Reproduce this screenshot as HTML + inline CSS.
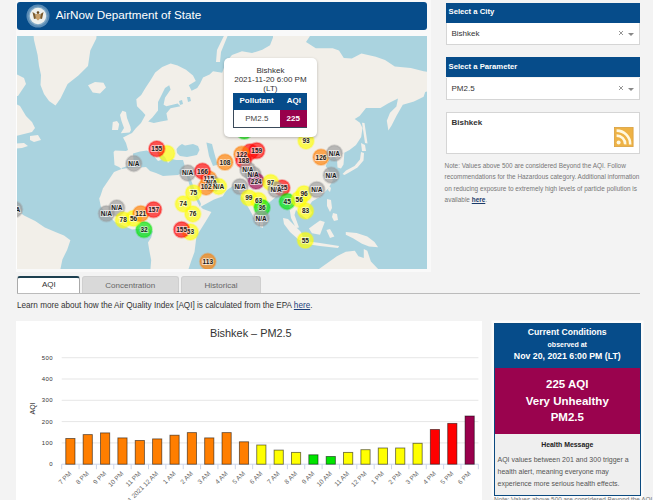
<!DOCTYPE html>
<html><head><meta charset="utf-8">
<style>
*{box-sizing:border-box;margin:0;padding:0}
html,body{width:653px;height:500px;overflow:hidden;background:#f3f3f3;font-family:"Liberation Sans",sans-serif;color:#333}
.abs{position:absolute}
#hdr{left:17px;top:2px;width:410px;height:28px;background:#064c8a;border-radius:3px}
#hdr .t{left:38.8px;top:5.5px;font-size:11.7px;color:#fff;white-space:nowrap}
.mk{font-size:6.5px;font-weight:bold;fill:#1a1a1a;text-anchor:middle;stroke:#fff;stroke-width:1.8px;paint-order:stroke;stroke-opacity:0.6}
#map{left:16px;top:36px;width:411px;height:233px;background:#aad3df;overflow:hidden}
.ph{left:445.5px;width:194.5px;height:20px;background:#064c8a;color:#fff;font-weight:bold;font-size:7.7px;padding:4.9px 0 0 3px;white-space:nowrap}
.sel{left:445.5px;width:194.5px;height:22px;background:#fff;border:1px solid #d5d5d5;border-top:none;font-size:8px;padding:6.6px 0 0 5px}
.sel .x{position:absolute;left:171.8px;top:7.3px}
.sel .c{position:absolute;right:5px;top:10px;width:0;height:0;border-left:3px solid transparent;border-right:3px solid transparent;border-top:3px solid #888}
.note{left:444.6px;top:160px;width:196px;font-size:6.43px;line-height:11.4px;color:#777}
.tab{top:275.5px;height:18px;font-size:8px;text-align:center;padding-top:4px;color:#666;background:#d9d9d9;border:1px solid #cfcfcf;border-bottom:none;border-radius:3px 3px 0 0}
#chart{left:16px;top:320.5px;width:466px;height:190px;background:#fff}
.ct{left:0;width:100%;text-align:center;white-space:nowrap}
#cc{left:494px;top:322.5px;width:146.5px;height:173px;border:1px solid #0b4a80;background:#efefef;box-shadow:0 0 0 2.5px #fbfbfb}
</style></head><body>
<div id="panel" class="abs" style="left:15.5px;top:0;width:415px;height:272px;background:#f9f9f9"></div>
<div id="hdr" class="abs">
  <svg class="abs" style="left:8.7px;top:2.3px" width="24" height="24" viewBox="0 0 24 24">
    <circle cx="12" cy="12" r="11.5" fill="#5a8cb6"/>
    <circle cx="12" cy="12" r="9.6" fill="#7fa8c6"/>
    <circle cx="12" cy="12" r="8.2" fill="#eef1ee"/>
    <path d="M6.5 8 L9.5 10 L10 14.5 L8 15 Z M17.5 8 L14.5 10 L14 14.5 L16 15 Z" fill="#7a5a2c"/>
    <path d="M10 10 L14 10 L14.2 14.5 L12 16.5 L9.8 14.5 Z" fill="#c8a06a"/>
    <circle cx="12" cy="8.6" r="1.3" fill="#6a4a20"/>
  </svg>
  <div class="t abs">AirNow Department of State</div>
</div>

<div id="map" class="abs">
<svg width="411" height="233" viewBox="0 0 411 233" style="position:absolute;left:0;top:0">
<g id="land" transform="translate(-16,-36)">
<path d="M33.0,30.0 L97.0,30.0 L96.3,38.4 L90.3,50.4 L88.0,66.0 L78.4,75.6 L67.6,84.0 L60.5,98.4 L55.5,105.6 L49.0,101.0 L44.0,94.0 L40.5,85.0 L41.0,75.0 L39.0,66.0 L37.6,55.0 L34.0,40.0Z M88.0,85.2 L95.0,82.0 L103.5,82.8 L106.0,87.6 L100.0,93.6 L92.7,92.4Z M10.0,70.0 L16.0,74.0 L24.0,78.0 L26.0,84.0 L22.0,90.0 L18.0,96.0 L10.0,96.0Z M10.0,104.0 L16.0,104.0 L20.0,106.0 L26.0,116.0 L32.0,122.0 L35.0,128.0 L32.0,132.0 L24.0,134.0 L16.0,136.0 L10.0,136.0Z M30.0,136.0 L38.0,135.0 L41.0,140.0 L34.0,142.0 L30.0,140.0Z M10.0,144.0 L24.0,143.0 L28.0,146.0 L22.0,148.0 L10.0,149.0Z M10.0,207.0 L16.0,209.8 L24.0,215.4 L35.2,221.0 L44.8,227.4 L56.0,232.2 L64.0,235.4 L70.4,240.2 L67.2,249.8 L62.4,259.4 L59.2,275.0 L10.0,275.0Z M122.4,110.8 L126.0,112.0 L127.0,118.0 L130.4,126.8 L131.0,130.0 L129.6,132.4 L120.8,133.2 L124.0,128.0 L121.5,121.0 L120.0,115.0Z M112.8,122.0 L117.0,121.0 L119.2,124.0 L118.0,130.0 L112.0,130.0Z M142.6,111.8 L137.0,106.2 L136.3,99.2 L141.2,95.0 L145.4,88.0 L151.0,79.6 L155.2,72.6 L162.2,67.0 L170.6,63.5 L177.6,65.6 L186.0,69.8 L193.0,75.4 L195.8,81.0 L188.8,85.2 L191.6,90.8 L197.2,88.0 L200.0,83.8 L203.0,77.6 L209.6,74.4 L213.0,71.2 L222.2,72.8 L226.0,62.0 L232.0,55.0 L242.0,51.3 L252.0,53.0 L262.3,49.8 L270.0,45.2 L273.0,37.5 L273.0,30.0 L314.0,30.0 L306.0,42.0 L315.8,48.3 L332.7,48.3 L339.0,50.4 L343.8,58.0 L351.8,58.4 L361.4,53.6 L375.8,56.8 L385.0,60.0 L394.8,66.4 L410.8,68.0 L423.6,71.2 L435.0,72.8 L435.0,88.8 L425.2,92.0 L423.6,96.8 L414.0,101.6 L402.8,104.8 L396.4,116.0 L391.6,125.6 L388.4,130.4 L386.8,120.8 L390.0,112.8 L396.4,106.4 L398.0,98.4 L388.4,103.2 L380.4,108.0 L366.0,108.0 L359.6,116.0 L354.7,118.9 L359.9,122.8 L362.5,128.0 L361.2,137.1 L356.0,144.9 L349.5,150.1 L344.3,152.7 L344.0,158.0 L343.5,164.4 L341.0,168.5 L337.5,167.5 L337.0,160.0 L334.0,156.0 L328.8,160.0 L325.6,166.0 L330.0,172.0 L332.8,180.8 L328.0,188.8 L320.0,196.8 L312.0,201.6 L308.8,206.4 L312.0,212.8 L307.2,219.2 L300.0,214.0 L296.0,210.0 L294.5,215.0 L299.0,227.5 L296.0,228.0 L291.0,218.0 L289.0,205.0 L286.2,201.4 L279.0,194.2 L268.4,203.2 L262.0,215.0 L258.0,226.0 L252.0,214.0 L244.0,200.0 L238.0,190.0 L233.0,186.0 L227.0,190.0 L225.0,192.5 L222.8,196.3 L214.0,199.6 L200.7,206.7 L203.0,209.0 L211.4,212.0 L206.0,221.0 L201.0,229.0 L196.5,236.0 L195.5,244.0 L194.5,252.0 L191.4,260.4 L188.2,270.0 L187.0,275.0 L150.0,275.0 L151.2,260.0 L149.6,252.0 L148.0,242.4 L151.2,237.6 L152.8,231.2 L148.0,228.0 L132.0,229.6 L115.0,222.0 L106.0,213.0 L100.8,206.6 L99.2,198.6 L100.4,196.0 L102.9,188.6 L109.5,178.8 L114.0,172.0 L121.5,169.0 L119.0,167.0 L114.5,165.0 L113.6,152.0 L115.0,150.5 L126.0,151.0 L128.0,150.0 L126.0,143.0 L123.0,137.5 L128.0,135.0 L132.0,133.0 L136.0,128.0 L141.0,123.0 L145.4,115.0 L142.6,111.8Z M226.8,30.0 L230.0,30.0 L221.0,52.0 L220.0,62.0 L216.0,62.0 L217.0,50.0Z M362.0,122.8 L364.5,123.0 L367.5,143.6 L365.0,143.0Z M361.0,143.0 L365.0,145.0 L366.0,151.0 L362.0,151.0Z M361.0,152.0 L364.0,153.0 L363.5,160.5 L357.5,167.5 L349.0,172.5 L344.5,175.0 L342.5,174.0 L346.0,170.5 L354.5,166.0 L360.0,159.5Z M329.0,186.0 L331.0,188.0 L330.0,192.0 L328.0,190.0Z M327.0,199.0 L331.0,200.0 L332.0,208.0 L330.0,212.0 L327.0,206.0Z M333.0,213.0 L337.0,214.0 L338.0,220.0 L334.0,221.0 L332.0,217.0Z M308.9,228.4 L315.0,224.0 L320.0,220.5 L324.8,222.0 L320.0,234.8 L312.0,233.2Z M326.4,230.0 L330.0,229.0 L334.4,236.4 L330.0,238.0Z M283.0,218.0 L288.0,219.0 L295.0,226.0 L301.0,232.0 L304.0,240.0 L299.0,240.0 L290.0,232.0 L284.0,224.0Z M305.0,241.0 L320.0,243.0 L339.2,246.0 L338.0,248.0 L320.0,246.0 L306.0,244.0Z M345.8,232.0 L356.6,232.9 L367.3,236.5 L374.5,241.9 L378.1,247.3 L369.1,246.4 L362.0,243.7 L353.0,238.3 L345.8,234.7Z M318.5,275.0 L319.0,269.0 L336.9,256.2 L345.8,251.7 L354.8,250.8 L358.4,256.2 L363.8,258.0 L363.8,249.0 L367.3,250.8 L370.9,261.6 L378.1,269.0 L380.0,275.0Z M260.0,220.0 L263.0,222.0 L263.0,228.0 L260.0,227.0Z" fill="#f2efe9"/>
<path d="M169.2,85.2 L170.6,89.4 L165.0,97.8 L163.6,104.8 L166.4,106.2 L177.6,103.4 L180.4,106.2 L170.6,108.3 L166.4,113.2 L167.8,120.2 L160.8,121.6 L153.8,123.0 L148.2,121.6 L152.4,117.4 L158.0,110.4 L158.0,102.0 L160.8,96.4 L165.0,88.0Z M121.5,168.0 L128.0,166.0 L133.5,160.0 L133.0,153.5 L140.0,151.5 L147.0,150.5 L153.0,155.0 L158.0,161.0 L161.0,160.0 L157.0,152.0 L153.0,147.0 L158.0,150.0 L165.0,157.0 L168.0,163.0 L172.0,159.0 L176.0,160.0 L183.0,160.0 L184.5,165.0 L184.0,172.0 L178.0,175.0 L170.0,175.6 L163.0,176.0 L156.0,173.0 L150.0,171.0 L146.0,167.0 L140.0,167.5 L128.0,168.0 L122.0,169.0Z M176.5,149.0 L179.0,146.0 L182.0,144.0 L185.0,145.5 L193.0,144.0 L198.0,146.0 L199.5,150.0 L197.0,155.0 L187.0,156.9 L180.0,156.0 L177.0,153.0Z M206.4,142.4 L212.0,144.0 L214.0,152.0 L217.6,164.8 L213.0,166.0 L209.0,156.0Z M179.0,101.0 L182.0,100.0 L183.0,104.0 L180.0,105.0Z M187.0,97.0 L190.0,97.0 L191.0,101.0 L188.0,102.0Z M185.0,170.0 L188.0,172.0 L194.0,188.0 L201.0,204.0 L200.0,207.0 L191.0,190.0Z M205.0,176.0 L212.0,183.0 L218.0,190.0 L216.0,192.0 L208.0,186.0 L203.0,179.0Z" fill="#aad3df"/>
</g>
<g id="mk" transform="translate(-16,-36)">
<circle cx="14.5" cy="209.4" r="7.9" fill="#999999" fill-opacity="0.66" stroke="#999999" stroke-opacity="0.3" stroke-width="2"/>
<circle cx="133.8" cy="163.5" r="7.9" fill="#999999" fill-opacity="0.66" stroke="#999999" stroke-opacity="0.3" stroke-width="2"/>
<circle cx="166.9" cy="153.4" r="7.9" fill="#ffff00" fill-opacity="0.66" stroke="#ffff00" stroke-opacity="0.3" stroke-width="2"/>
<circle cx="156.8" cy="148.8" r="7.9" fill="#ff0000" fill-opacity="0.66" stroke="#ff0000" stroke-opacity="0.3" stroke-width="2"/>
<circle cx="187.7" cy="173.0" r="7.9" fill="#999999" fill-opacity="0.66" stroke="#999999" stroke-opacity="0.3" stroke-width="2"/>
<circle cx="208.8" cy="178.9" r="7.9" fill="#ff7e00" fill-opacity="0.66" stroke="#ff7e00" stroke-opacity="0.3" stroke-width="2"/>
<circle cx="211.5" cy="183.0" r="7.9" fill="#999999" fill-opacity="0.66" stroke="#999999" stroke-opacity="0.3" stroke-width="2"/>
<circle cx="218.7" cy="186.5" r="7.9" fill="#ffff00" fill-opacity="0.66" stroke="#ffff00" stroke-opacity="0.3" stroke-width="2"/>
<circle cx="206.1" cy="187.0" r="7.9" fill="#ff7e00" fill-opacity="0.66" stroke="#ff7e00" stroke-opacity="0.3" stroke-width="2"/>
<circle cx="202.5" cy="171.2" r="7.9" fill="#ff0000" fill-opacity="0.66" stroke="#ff0000" stroke-opacity="0.3" stroke-width="2"/>
<circle cx="193.5" cy="192.8" r="7.9" fill="#ffff00" fill-opacity="0.66" stroke="#ffff00" stroke-opacity="0.3" stroke-width="2"/>
<circle cx="183.2" cy="204.0" r="7.9" fill="#ffff00" fill-opacity="0.66" stroke="#ffff00" stroke-opacity="0.3" stroke-width="2"/>
<circle cx="192.8" cy="214.0" r="7.9" fill="#ffff00" fill-opacity="0.66" stroke="#ffff00" stroke-opacity="0.3" stroke-width="2"/>
<circle cx="190.4" cy="232.0" r="7.9" fill="#ffff00" fill-opacity="0.66" stroke="#ffff00" stroke-opacity="0.3" stroke-width="2"/>
<circle cx="181.6" cy="229.6" r="7.9" fill="#ff0000" fill-opacity="0.66" stroke="#ff0000" stroke-opacity="0.3" stroke-width="2"/>
<circle cx="207.8" cy="261.5" r="7.9" fill="#ff7e00" fill-opacity="0.66" stroke="#ff7e00" stroke-opacity="0.3" stroke-width="2"/>
<circle cx="116.8" cy="208.0" r="7.9" fill="#999999" fill-opacity="0.66" stroke="#999999" stroke-opacity="0.3" stroke-width="2"/>
<circle cx="106.4" cy="213.6" r="7.9" fill="#999999" fill-opacity="0.66" stroke="#999999" stroke-opacity="0.3" stroke-width="2"/>
<circle cx="144.0" cy="229.6" r="7.9" fill="#00e400" fill-opacity="0.66" stroke="#00e400" stroke-opacity="0.3" stroke-width="2"/>
<circle cx="123.2" cy="220.0" r="7.9" fill="#ffff00" fill-opacity="0.66" stroke="#ffff00" stroke-opacity="0.3" stroke-width="2"/>
<circle cx="133.6" cy="218.4" r="7.9" fill="#ffff00" fill-opacity="0.66" stroke="#ffff00" stroke-opacity="0.3" stroke-width="2"/>
<circle cx="140.8" cy="213.6" r="7.9" fill="#ff7e00" fill-opacity="0.66" stroke="#ff7e00" stroke-opacity="0.3" stroke-width="2"/>
<circle cx="153.6" cy="209.6" r="7.9" fill="#ff0000" fill-opacity="0.66" stroke="#ff0000" stroke-opacity="0.3" stroke-width="2"/>
<circle cx="225.0" cy="162.2" r="7.9" fill="#ff7e00" fill-opacity="0.66" stroke="#ff7e00" stroke-opacity="0.3" stroke-width="2"/>
<circle cx="244.3" cy="131.2" r="7.9" fill="#00e400" fill-opacity="0.66" stroke="#00e400" stroke-opacity="0.3" stroke-width="2"/>
<circle cx="306.0" cy="141.0" r="7.9" fill="#ffff00" fill-opacity="0.66" stroke="#ffff00" stroke-opacity="0.3" stroke-width="2"/>
<circle cx="250.0" cy="152.0" r="7.9" fill="#ff0000" fill-opacity="0.66" stroke="#ff0000" stroke-opacity="0.3" stroke-width="2"/>
<circle cx="256.8" cy="150.6" r="7.9" fill="#ff0000" fill-opacity="0.66" stroke="#ff0000" stroke-opacity="0.3" stroke-width="2"/>
<circle cx="241.8" cy="154.2" r="7.9" fill="#ff7e00" fill-opacity="0.66" stroke="#ff7e00" stroke-opacity="0.3" stroke-width="2"/>
<circle cx="243.6" cy="160.2" r="7.9" fill="#ff0000" fill-opacity="0.66" stroke="#ff0000" stroke-opacity="0.3" stroke-width="2"/>
<circle cx="247.8" cy="169.8" r="7.9" fill="#999999" fill-opacity="0.66" stroke="#999999" stroke-opacity="0.3" stroke-width="2"/>
<circle cx="253.2" cy="174.6" r="7.9" fill="#999999" fill-opacity="0.66" stroke="#999999" stroke-opacity="0.3" stroke-width="2"/>
<circle cx="256.2" cy="181.2" r="7.9" fill="#99004c" fill-opacity="0.66" stroke="#99004c" stroke-opacity="0.3" stroke-width="2"/>
<circle cx="240.0" cy="186.6" r="7.9" fill="#999999" fill-opacity="0.66" stroke="#999999" stroke-opacity="0.3" stroke-width="2"/>
<circle cx="282.0" cy="187.8" r="7.9" fill="#ff0000" fill-opacity="0.66" stroke="#ff0000" stroke-opacity="0.3" stroke-width="2"/>
<circle cx="270.6" cy="182.4" r="7.9" fill="#ffff00" fill-opacity="0.66" stroke="#ffff00" stroke-opacity="0.3" stroke-width="2"/>
<circle cx="276.0" cy="189.6" r="7.9" fill="#999999" fill-opacity="0.66" stroke="#999999" stroke-opacity="0.3" stroke-width="2"/>
<circle cx="248.8" cy="197.8" r="7.9" fill="#ffff00" fill-opacity="0.66" stroke="#ffff00" stroke-opacity="0.3" stroke-width="2"/>
<circle cx="258.6" cy="200.5" r="7.9" fill="#ffff00" fill-opacity="0.66" stroke="#ffff00" stroke-opacity="0.3" stroke-width="2"/>
<circle cx="262.1" cy="207.6" r="7.9" fill="#00e400" fill-opacity="0.66" stroke="#00e400" stroke-opacity="0.3" stroke-width="2"/>
<circle cx="261.2" cy="218.3" r="7.9" fill="#999999" fill-opacity="0.66" stroke="#999999" stroke-opacity="0.3" stroke-width="2"/>
<circle cx="287.2" cy="201.5" r="7.9" fill="#00e400" fill-opacity="0.66" stroke="#00e400" stroke-opacity="0.3" stroke-width="2"/>
<circle cx="304.0" cy="193.6" r="7.9" fill="#ffff00" fill-opacity="0.66" stroke="#ffff00" stroke-opacity="0.3" stroke-width="2"/>
<circle cx="299.2" cy="199.2" r="7.9" fill="#ffff00" fill-opacity="0.66" stroke="#ffff00" stroke-opacity="0.3" stroke-width="2"/>
<circle cx="305.6" cy="211.0" r="7.9" fill="#ffff00" fill-opacity="0.66" stroke="#ffff00" stroke-opacity="0.3" stroke-width="2"/>
<circle cx="305.3" cy="240.3" r="7.9" fill="#ffff00" fill-opacity="0.66" stroke="#ffff00" stroke-opacity="0.3" stroke-width="2"/>
<circle cx="316.8" cy="189.6" r="7.9" fill="#999999" fill-opacity="0.66" stroke="#999999" stroke-opacity="0.3" stroke-width="2"/>
<circle cx="331.2" cy="175.2" r="7.9" fill="#999999" fill-opacity="0.66" stroke="#999999" stroke-opacity="0.3" stroke-width="2"/>
<circle cx="321.0" cy="157.2" r="7.9" fill="#ff7e00" fill-opacity="0.66" stroke="#ff7e00" stroke-opacity="0.3" stroke-width="2"/>
<circle cx="334.4" cy="153.2" r="7.9" fill="#999999" fill-opacity="0.66" stroke="#999999" stroke-opacity="0.3" stroke-width="2"/>
<text x="14.5" y="211.7" class="mk">N/A</text>
<text x="133.8" y="165.8" class="mk">N/A</text>
<text x="156.8" y="151.1" class="mk">155</text>
<text x="187.7" y="175.3" class="mk">N/A</text>
<text x="208.8" y="181.2" class="mk">115</text>
<text x="211.5" y="185.3" class="mk">N/A</text>
<text x="218.7" y="188.8" class="mk">N/A</text>
<text x="206.1" y="189.3" class="mk">102</text>
<text x="202.5" y="173.5" class="mk">166</text>
<text x="193.5" y="195.1" class="mk">75</text>
<text x="183.2" y="206.3" class="mk">74</text>
<text x="192.8" y="216.3" class="mk">76</text>
<text x="190.4" y="234.3" class="mk">53</text>
<text x="181.6" y="231.9" class="mk">155</text>
<text x="207.8" y="263.8" class="mk">113</text>
<text x="116.8" y="210.3" class="mk">N/A</text>
<text x="106.4" y="215.9" class="mk">N/A</text>
<text x="144.0" y="231.9" class="mk">32</text>
<text x="123.2" y="222.3" class="mk">78</text>
<text x="133.6" y="220.7" class="mk">56</text>
<text x="140.8" y="215.9" class="mk">121</text>
<text x="153.6" y="211.9" class="mk">157</text>
<text x="225.0" y="164.5" class="mk">108</text>
<text x="306.0" y="143.3" class="mk">93</text>
<text x="256.8" y="152.9" class="mk">159</text>
<text x="241.8" y="156.5" class="mk">122</text>
<text x="243.6" y="162.5" class="mk">188</text>
<text x="247.8" y="172.1" class="mk">N/A</text>
<text x="253.2" y="176.9" class="mk">N/A</text>
<text x="256.2" y="183.5" class="mk">224</text>
<text x="240.0" y="188.9" class="mk">N/A</text>
<text x="282.0" y="190.1" class="mk">225</text>
<text x="270.6" y="184.7" class="mk">97</text>
<text x="276.0" y="191.9" class="mk">N/A</text>
<text x="248.8" y="200.1" class="mk">99</text>
<text x="258.6" y="202.8" class="mk">63</text>
<text x="262.1" y="209.9" class="mk">36</text>
<text x="261.2" y="220.6" class="mk">N/A</text>
<text x="287.2" y="203.8" class="mk">45</text>
<text x="304.0" y="195.9" class="mk">96</text>
<text x="299.2" y="201.5" class="mk">56</text>
<text x="305.6" y="213.3" class="mk">83</text>
<text x="305.3" y="242.6" class="mk">55</text>
<text x="316.8" y="191.9" class="mk">N/A</text>
<text x="331.2" y="177.5" class="mk">N/A</text>
<text x="321.0" y="159.5" class="mk">126</text>
<text x="334.4" y="155.5" class="mk">N/A</text>
</g>
</svg>
</div>

<div id="mapedge" class="abs" style="left:16px;top:36px;width:1.2px;height:233px;background:#fdfdfd"></div>
<!--POP-->
<div class="abs" style="left:224px;top:57.6px;width:92.8px;height:79.4px;background:#fff;border-radius:5px;box-shadow:0 1px 3px rgba(0,0,0,0.25)">
  <div class="abs" style="left:0;width:100%;top:8px;text-align:center;font-size:8px;line-height:9.1px;color:#333">Bishkek<br>2021-11-20 6:00 PM<br>(LT)</div>
  <div class="abs" style="left:8.9px;top:35.3px;width:74.5px;height:35.5px;background:#3a4a5a">
    <div class="abs" style="left:0;top:0;width:74.5px;height:16.7px;background:#064c8a"></div>
    <div class="abs" style="left:0;top:3.2px;width:47.5px;color:#fff;font-weight:bold;font-size:8px;text-align:center">Pollutant</div>
    <div class="abs" style="left:47.5px;top:3.2px;width:27px;color:#fff;font-weight:bold;font-size:8px;text-align:center">AQI</div>
    <div class="abs" style="left:0.8px;top:16.7px;width:46.2px;height:17.8px;background:#fff;color:#444;font-size:8px;text-align:center;padding-top:4px">PM2.5</div>
    <div class="abs" style="left:47px;top:16.7px;width:26.7px;height:17.8px;background:#98004b;color:#fff;font-weight:bold;font-size:8px;text-align:center;padding-top:4px">225</div>
  </div>
</div>
<!--/POP-->
<div class="ph abs" style="top:2.5px">Select a City</div>
<div class="sel abs" style="top:22.5px">Bishkek<svg class="x" width="6" height="6" viewBox="0 0 6 6"><path d="M1 1L5 5M5 1L1 5" stroke="#8a8a8a" stroke-width="0.9"/></svg><span class="c"></span></div>
<div class="ph abs" style="top:57.2px">Select a Parameter</div>
<div class="sel abs" style="top:77.7px">PM2.5<svg class="x" width="6" height="6" viewBox="0 0 6 6"><path d="M1 1L5 5M5 1L1 5" stroke="#8a8a8a" stroke-width="0.9"/></svg><span class="c"></span></div>
<div class="abs" style="left:445.5px;top:112px;width:194.5px;height:42px;background:#fff;border:1px solid #d5d5d5">
  <div class="abs" style="left:5px;top:5px;font-size:8px;font-weight:bold;color:#333">Bishkek</div>
  <svg class="abs" style="left:167.6px;top:14px" width="19.5" height="20" viewBox="0 0 19.5 20">
    <rect x="0.4" y="0.4" width="18.7" height="19.2" fill="#eeb245" stroke="#d9a040" stroke-width="0.8"/>
    <circle cx="4.6" cy="15.6" r="2" fill="#fff8e0"/>
    <path d="M2.6 8.6 A8.6 8.6 0 0 1 11.2 17.4" stroke="#fff8e0" stroke-width="2.6" fill="none"/>
    <path d="M2.6 3.6 A13.6 13.6 0 0 1 16.2 17.4" stroke="#fff8e0" stroke-width="2.6" fill="none"/>
  </svg>
</div>
<div class="note abs">Note: Values above 500 are considered Beyond the AQI. Follow recommendations for the Hazardous category. Additional information on reducing exposure to extremely high levels of particle pollution is available <b style="color:#1a3a6a;text-decoration:underline">here</b>.</div>

<div class="tab abs" style="left:17.3px;width:63px;background:#fff;border:1px solid #aaa;border-top:2px solid #1d4050;color:#333;padding-top:2.8px">AQI</div>
<div class="tab abs" style="left:81.5px;width:97.5px">Concentration</div>
<div class="tab abs" style="left:181px;width:80px">Historical</div>
<div class="abs" style="left:17px;top:293px;width:623px;height:1px;background:#bbb"></div>
<div class="abs" style="left:17px;top:300.5px;font-size:8.17px;white-space:nowrap;color:#333">Learn more about how the Air Quality Index [AQI] is calculated from the EPA <span style="text-decoration:underline;color:#1d3f7a">here</span>.</div>

<div id="chart" class="abs">
</div>
<!--CHART-->
<svg class="abs" style="left:0;top:0" width="653" height="500" viewBox="0 0 653 500">
<text x="250.8" y="337" font-size="10.9" fill="#333" text-anchor="middle" font-family="Liberation Sans">Bishkek – PM2.5</text>
<rect x="61.7" y="442.4" width="416.7" height="1" fill="#e6e6e6"/>
<rect x="61.7" y="421.1" width="416.7" height="1" fill="#e6e6e6"/>
<rect x="61.7" y="399.8" width="416.7" height="1" fill="#e6e6e6"/>
<rect x="61.7" y="378.5" width="416.7" height="1" fill="#e6e6e6"/>
<rect x="61.7" y="357.2" width="416.7" height="1" fill="#e6e6e6"/>
<text x="52.9" y="466.2" font-size="6" fill="#333" text-anchor="end" font-family="Liberation Sans" letter-spacing="0.35">0</text>
<text x="52.9" y="444.9" font-size="6" fill="#333" text-anchor="end" font-family="Liberation Sans" letter-spacing="0.35">100</text>
<text x="52.9" y="423.6" font-size="6" fill="#333" text-anchor="end" font-family="Liberation Sans" letter-spacing="0.35">200</text>
<text x="52.9" y="402.3" font-size="6" fill="#333" text-anchor="end" font-family="Liberation Sans" letter-spacing="0.35">300</text>
<text x="52.9" y="381.0" font-size="6" fill="#333" text-anchor="end" font-family="Liberation Sans" letter-spacing="0.35">400</text>
<text x="52.9" y="359.7" font-size="6" fill="#333" text-anchor="end" font-family="Liberation Sans" letter-spacing="0.35">500</text>
<text transform="translate(35.3,408.5) rotate(-90)" font-size="7" fill="#333" text-anchor="middle" font-family="Liberation Sans">AQI</text>
<rect x="61.7" y="463.7" width="416.7" height="1" fill="#ccd6eb"/>
<rect x="61.20" y="464.2" width="1" height="5" fill="#ccd6eb"/>
<rect x="78.56" y="464.2" width="1" height="5" fill="#ccd6eb"/>
<rect x="95.92" y="464.2" width="1" height="5" fill="#ccd6eb"/>
<rect x="113.28" y="464.2" width="1" height="5" fill="#ccd6eb"/>
<rect x="130.64" y="464.2" width="1" height="5" fill="#ccd6eb"/>
<rect x="148.00" y="464.2" width="1" height="5" fill="#ccd6eb"/>
<rect x="165.36" y="464.2" width="1" height="5" fill="#ccd6eb"/>
<rect x="182.72" y="464.2" width="1" height="5" fill="#ccd6eb"/>
<rect x="200.08" y="464.2" width="1" height="5" fill="#ccd6eb"/>
<rect x="217.44" y="464.2" width="1" height="5" fill="#ccd6eb"/>
<rect x="234.80" y="464.2" width="1" height="5" fill="#ccd6eb"/>
<rect x="252.16" y="464.2" width="1" height="5" fill="#ccd6eb"/>
<rect x="269.52" y="464.2" width="1" height="5" fill="#ccd6eb"/>
<rect x="286.88" y="464.2" width="1" height="5" fill="#ccd6eb"/>
<rect x="304.24" y="464.2" width="1" height="5" fill="#ccd6eb"/>
<rect x="321.60" y="464.2" width="1" height="5" fill="#ccd6eb"/>
<rect x="338.96" y="464.2" width="1" height="5" fill="#ccd6eb"/>
<rect x="356.32" y="464.2" width="1" height="5" fill="#ccd6eb"/>
<rect x="373.68" y="464.2" width="1" height="5" fill="#ccd6eb"/>
<rect x="391.04" y="464.2" width="1" height="5" fill="#ccd6eb"/>
<rect x="408.40" y="464.2" width="1" height="5" fill="#ccd6eb"/>
<rect x="425.76" y="464.2" width="1" height="5" fill="#ccd6eb"/>
<rect x="443.12" y="464.2" width="1" height="5" fill="#ccd6eb"/>
<rect x="460.48" y="464.2" width="1" height="5" fill="#ccd6eb"/>
<rect x="477.84" y="464.2" width="1" height="5" fill="#ccd6eb"/>
<rect x="65.78" y="438.50" width="9.2" height="25.70" fill="#ff7e00" stroke="#000" stroke-opacity="0.55" stroke-width="0.9"/>
<rect x="83.14" y="434.60" width="9.2" height="29.60" fill="#ff7e00" stroke="#000" stroke-opacity="0.55" stroke-width="0.9"/>
<rect x="100.50" y="432.90" width="9.2" height="31.30" fill="#ff7e00" stroke="#000" stroke-opacity="0.55" stroke-width="0.9"/>
<rect x="117.86" y="437.90" width="9.2" height="26.30" fill="#ff7e00" stroke="#000" stroke-opacity="0.55" stroke-width="0.9"/>
<rect x="135.22" y="440.50" width="9.2" height="23.70" fill="#ff7e00" stroke="#000" stroke-opacity="0.55" stroke-width="0.9"/>
<rect x="152.58" y="438.90" width="9.2" height="25.30" fill="#ff7e00" stroke="#000" stroke-opacity="0.55" stroke-width="0.9"/>
<rect x="169.94" y="435.20" width="9.2" height="29.00" fill="#ff7e00" stroke="#000" stroke-opacity="0.55" stroke-width="0.9"/>
<rect x="187.30" y="432.60" width="9.2" height="31.60" fill="#ff7e00" stroke="#000" stroke-opacity="0.55" stroke-width="0.9"/>
<rect x="204.66" y="437.90" width="9.2" height="26.30" fill="#ff7e00" stroke="#000" stroke-opacity="0.55" stroke-width="0.9"/>
<rect x="222.02" y="432.60" width="9.2" height="31.60" fill="#ff7e00" stroke="#000" stroke-opacity="0.55" stroke-width="0.9"/>
<rect x="239.38" y="441.80" width="9.2" height="22.40" fill="#ff7e00" stroke="#000" stroke-opacity="0.55" stroke-width="0.9"/>
<rect x="256.74" y="445.00" width="9.2" height="19.20" fill="#ffff00" stroke="#000" stroke-opacity="0.55" stroke-width="0.9"/>
<rect x="274.10" y="450.10" width="9.2" height="14.10" fill="#ffff00" stroke="#000" stroke-opacity="0.55" stroke-width="0.9"/>
<rect x="291.46" y="452.40" width="9.2" height="11.80" fill="#ffff00" stroke="#000" stroke-opacity="0.55" stroke-width="0.9"/>
<rect x="308.82" y="454.80" width="9.2" height="9.40" fill="#00e400" stroke="#000" stroke-opacity="0.55" stroke-width="0.9"/>
<rect x="326.18" y="456.50" width="9.2" height="7.70" fill="#00e400" stroke="#000" stroke-opacity="0.55" stroke-width="0.9"/>
<rect x="343.54" y="452.40" width="9.2" height="11.80" fill="#ffff00" stroke="#000" stroke-opacity="0.55" stroke-width="0.9"/>
<rect x="360.90" y="449.70" width="9.2" height="14.50" fill="#ffff00" stroke="#000" stroke-opacity="0.55" stroke-width="0.9"/>
<rect x="378.26" y="448.00" width="9.2" height="16.20" fill="#ffff00" stroke="#000" stroke-opacity="0.55" stroke-width="0.9"/>
<rect x="395.62" y="448.00" width="9.2" height="16.20" fill="#ffff00" stroke="#000" stroke-opacity="0.55" stroke-width="0.9"/>
<rect x="412.98" y="443.30" width="9.2" height="20.90" fill="#ffff00" stroke="#000" stroke-opacity="0.55" stroke-width="0.9"/>
<rect x="430.34" y="429.50" width="9.2" height="34.70" fill="#ff0000" stroke="#000" stroke-opacity="0.55" stroke-width="0.9"/>
<rect x="447.70" y="423.40" width="9.2" height="40.80" fill="#ff0000" stroke="#000" stroke-opacity="0.55" stroke-width="0.9"/>
<rect x="465.06" y="416.00" width="9.2" height="48.20" fill="#99004c" stroke="#000" stroke-opacity="0.55" stroke-width="0.9"/>
<text transform="translate(71.88,474) rotate(-45)" font-size="6.5" fill="#666" text-anchor="end" font-family="Liberation Sans">7 PM</text>
<text transform="translate(89.24,474) rotate(-45)" font-size="6.5" fill="#666" text-anchor="end" font-family="Liberation Sans">8 PM</text>
<text transform="translate(106.60,474) rotate(-45)" font-size="6.5" fill="#666" text-anchor="end" font-family="Liberation Sans">9 PM</text>
<text transform="translate(123.96,474) rotate(-45)" font-size="6.5" fill="#666" text-anchor="end" font-family="Liberation Sans">10 PM</text>
<text transform="translate(141.32,474) rotate(-45)" font-size="6.5" fill="#666" text-anchor="end" font-family="Liberation Sans">11 PM</text>
<text transform="translate(158.68,474) rotate(-45)" font-size="6.5" fill="#666" text-anchor="end" font-family="Liberation Sans">Nov 21 2021  12 AM</text>
<text transform="translate(176.04,474) rotate(-45)" font-size="6.5" fill="#666" text-anchor="end" font-family="Liberation Sans">1 AM</text>
<text transform="translate(193.40,474) rotate(-45)" font-size="6.5" fill="#666" text-anchor="end" font-family="Liberation Sans">2 AM</text>
<text transform="translate(210.76,474) rotate(-45)" font-size="6.5" fill="#666" text-anchor="end" font-family="Liberation Sans">3 AM</text>
<text transform="translate(228.12,474) rotate(-45)" font-size="6.5" fill="#666" text-anchor="end" font-family="Liberation Sans">4 AM</text>
<text transform="translate(245.48,474) rotate(-45)" font-size="6.5" fill="#666" text-anchor="end" font-family="Liberation Sans">5 AM</text>
<text transform="translate(262.84,474) rotate(-45)" font-size="6.5" fill="#666" text-anchor="end" font-family="Liberation Sans">6 AM</text>
<text transform="translate(280.20,474) rotate(-45)" font-size="6.5" fill="#666" text-anchor="end" font-family="Liberation Sans">7 AM</text>
<text transform="translate(297.56,474) rotate(-45)" font-size="6.5" fill="#666" text-anchor="end" font-family="Liberation Sans">8 AM</text>
<text transform="translate(314.92,474) rotate(-45)" font-size="6.5" fill="#666" text-anchor="end" font-family="Liberation Sans">9 AM</text>
<text transform="translate(332.28,474) rotate(-45)" font-size="6.5" fill="#666" text-anchor="end" font-family="Liberation Sans">10 AM</text>
<text transform="translate(349.64,474) rotate(-45)" font-size="6.5" fill="#666" text-anchor="end" font-family="Liberation Sans">11 AM</text>
<text transform="translate(367.00,474) rotate(-45)" font-size="6.5" fill="#666" text-anchor="end" font-family="Liberation Sans">12 PM</text>
<text transform="translate(384.36,474) rotate(-45)" font-size="6.5" fill="#666" text-anchor="end" font-family="Liberation Sans">1 PM</text>
<text transform="translate(401.72,474) rotate(-45)" font-size="6.5" fill="#666" text-anchor="end" font-family="Liberation Sans">2 PM</text>
<text transform="translate(419.08,474) rotate(-45)" font-size="6.5" fill="#666" text-anchor="end" font-family="Liberation Sans">3 PM</text>
<text transform="translate(436.44,474) rotate(-45)" font-size="6.5" fill="#666" text-anchor="end" font-family="Liberation Sans">4 PM</text>
<text transform="translate(453.80,474) rotate(-45)" font-size="6.5" fill="#666" text-anchor="end" font-family="Liberation Sans">5 PM</text>
<text transform="translate(471.16,474) rotate(-45)" font-size="6.5" fill="#666" text-anchor="end" font-family="Liberation Sans">6 PM</text>
</svg>
<!--/CHART-->

<div id="cc" class="abs">
  <div class="abs" style="left:0;top:0;width:100%;height:44px;background:#064c8a"></div>
  <div class="abs" style="left:0;top:44px;width:100%;height:66.5px;background:#9a034e"></div>
  <div class="abs ct" style="top:3.5px;font-size:8.67px;font-weight:bold;color:#fff">Current Conditions</div>
  <div class="abs ct" style="top:17px;font-size:7px;font-weight:bold;color:#fff">observed at</div>
  <div class="abs ct" style="top:27.8px;font-size:8.76px;font-weight:bold;color:#fff">Nov 20, 2021 6:00 PM (LT)</div>
  <div class="abs ct" style="top:54px;font-size:11.5px;font-weight:bold;color:#fff">225 AQI</div>
  <div class="abs ct" style="top:71.5px;font-size:11.5px;font-weight:bold;color:#fff">Very Unhealthy</div>
  <div class="abs ct" style="top:87.6px;font-size:11.5px;font-weight:bold;color:#fff">PM2.5</div>
  <div class="abs ct" style="top:117px;font-size:6.9px;font-weight:bold;color:#222">Health Message</div>
  <div class="abs" style="left:2.5px;top:130px;width:142px;font-size:7px;line-height:12px;color:#555">AQI values between 201 and 300 trigger a health alert, meaning everyone may experience more serious health effects.</div>
</div>
<div class="abs" style="left:494px;top:496px;font-size:6.4px;color:#777;white-space:nowrap">Note: Values above 500 are considered Beyond the AQI. Follow</div>
</body></html>
